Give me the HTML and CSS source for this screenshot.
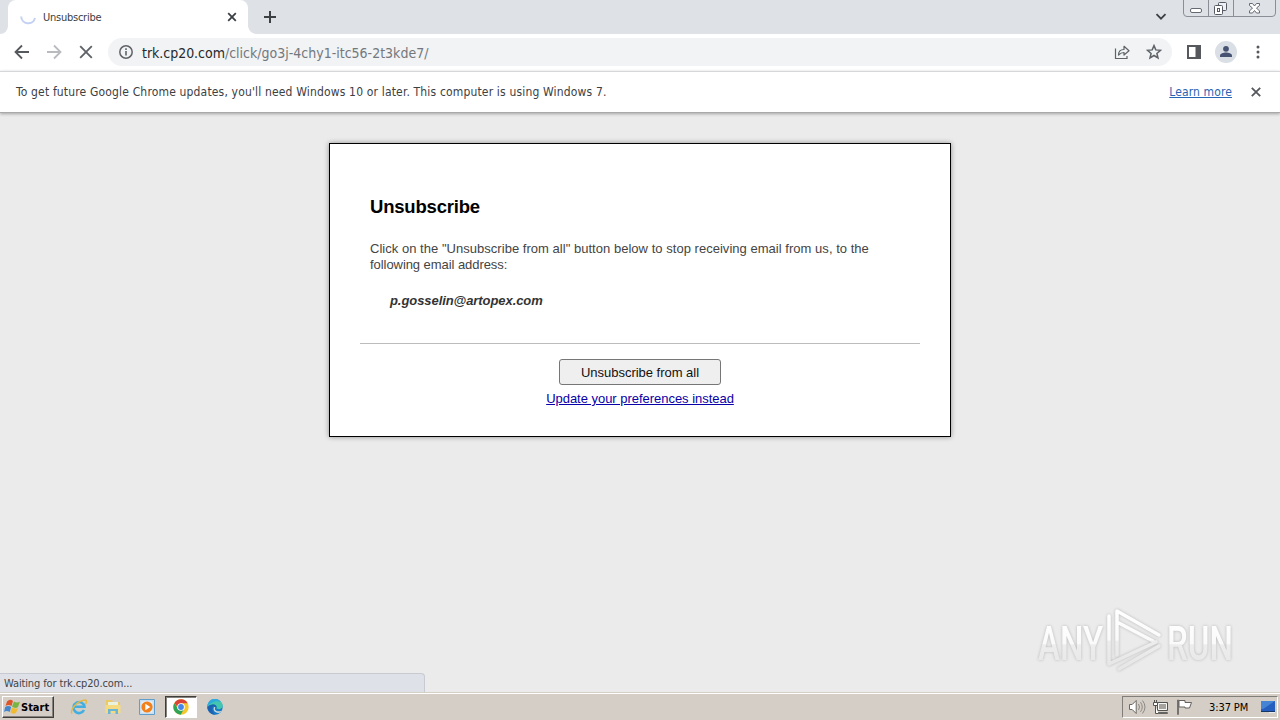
FILE: index.html
```html
<!DOCTYPE html>
<html lang="en">
<head>
<meta charset="utf-8">
<title>Unsubscribe</title>
<link rel="stylesheet" href="styles.css">
</head>
<body>
<div class="screen">
  <header class="tabstrip">
    <div class="prev-tab"></div>
    <div class="tab">
      <svg class="spinner" width="18" height="18" viewBox="0 0 18 18"><path d="M2.2 8.5A7 7 0 0 0 16 10" fill="none" stroke="#c3d1f3" stroke-width="2"/></svg>
      <span class="tab-title">Unsubscribe</span>
      <svg class="tab-close" width="10" height="10" viewBox="0 0 10 10"><path d="M1.2 1.2l7.6 7.6M8.8 1.2L1.2 8.8" stroke="#3c4043" stroke-width="1.8"/></svg>
    </div>
    <div class="after-tab">
      <svg width="12" height="12" viewBox="0 0 12 12"><path d="M6 0v12M0 6h12" stroke="#3c4043" stroke-width="2"/></svg>
    </div>
    <svg class="tab-search" width="12" height="8" viewBox="0 0 12 8"><path d="M1.5 1.2L6 5.7l4.500-4.500" fill="none" stroke="#3c4043" stroke-width="1.8"/></svg>
    <svg class="window-buttons" width="94" height="18" viewBox="0 0 94 18">
      <path d="M.5 0v13q0 3.500 3.500 3.500H89q3.500 0 3.500-3.500V0M25.500 0v16.500M50.500 0v16.500" fill="none" stroke="#8b8e96"/>
      <rect x="7.500" y="8.500" width="11" height="4" rx="1.500" fill="#fff" stroke="#646974"/>
      <rect x="35.500" y="2.500" width="8" height="8" rx="1" fill="#eef0f5" stroke="#555a65"/><rect x="31.500" y="5.500" width="8" height="9" rx="1" fill="#fff" stroke="#555a65"/><rect x="34.500" y="8.500" width="2" height="3" fill="#fff" stroke="#555a65"/>
      <path d="M66.500 3.500h3l2 2.500 2-2.500h3v2L73.500 8l3 3v2h-3l-2-2.500-2 2.500h-3v-2l3-3-3-2.500z" fill="#fff" stroke="#646974"/>
    </svg>
  </header>

  <nav class="toolbar">
    <svg class="ic back" width="16" height="16" viewBox="0 0 16 16"><path d="M15 8H2M8 1.500L1.500 8 8 14.500" fill="none" stroke="#55585c" stroke-width="1.800"/></svg>
    <svg class="ic forward" width="16" height="16" viewBox="0 0 16 16"><path d="M1 8h13M8 1.500L14.500 8 8 14.500" fill="none" stroke="#b9bbbe" stroke-width="1.800"/></svg>
    <svg class="ic stop" width="14" height="14" viewBox="0 0 14 14"><path d="M1.200 1.200l11.600 11.600M12.800 1.200L1.200 12.800" stroke="#5f6368" stroke-width="1.900"/></svg>
    <div class="omnibox">
      <svg class="info" width="14" height="14" viewBox="0 0 14 14"><circle cx="7" cy="7" r="6.200" fill="none" stroke="#5f6368" stroke-width="1.500"/><path d="M7 6v4.500M7 3.300v1.600" stroke="#5f6368" stroke-width="1.600"/></svg>
      <div class="url"><span class="host">trk.cp20.com</span><span class="path">/click/go3j-4chy1-itc56-2t3kde7/</span></div>
      <svg class="share" width="16" height="16" viewBox="0 0 16 16"><path d="M1.500 4.500v10h11.500V12" fill="none" stroke="#5f6368" stroke-width="1.200"/><path d="M4.500 11c0-4 2-5.500 5.500-5.500V2.300l5 4.500-5 4.200V8.500c-2 0-3.500.5-5.500 2.500z" fill="none" stroke="#5f6368" stroke-width="1.200" stroke-linejoin="round"/></svg>
      <svg class="star" width="16" height="16" viewBox="0 0 16 16"><path d="M8 1.600l1.800 4.300 4.700.4-3.600 3.100 1.100 4.600L8 11.500 4 14l1.100-4.600L1.500 6.300l4.700-.4z" fill="none" stroke="#5f6368" stroke-width="1.500"/></svg>
    </div>
    <svg class="panel" width="14" height="14" viewBox="0 0 14 14"><path d="M0 0h14v14H0zM2 2v10h6.500V2z" fill="#55585c" fill-rule="evenodd"/></svg>
    <svg class="avatar" width="22" height="22" viewBox="0 0 22 22"><circle cx="11" cy="11" r="11" fill="#dadee5"/><circle cx="11" cy="7.800" r="2.900" fill="#475372"/><path d="M5 16v-1.500c0-2 3.500-3 6-3s6 1 6 3V16z" fill="#475372"/></svg>
    <svg class="menu" width="4" height="14" viewBox="0 0 4 14"><circle cx="2" cy="2" r="1.500" fill="#55585c"/><circle cx="2" cy="7" r="1.500" fill="#55585c"/><circle cx="2" cy="12" r="1.500" fill="#55585c"/></svg>
  </nav>

  <div class="infobar">
    <span class="infobar-text">To get future Google Chrome updates, you'll need Windows 10 or later. This computer is using Windows 7.</span>
    <a class="learn">Learn more</a>
    <svg class="infobar-close" width="10" height="10" viewBox="0 0 10 10"><path d="M.8.8l8.400 8.400M9.200.8L.8 9.200" stroke="#55585c" stroke-width="1.800"/></svg>
  </div>

  <main class="page">
    <section class="card">
      <h1 class="heading">Unsubscribe</h1>
      <p class="copy"><span class="line-one">Click on the "Unsubscribe from all" button below to stop receiving email from us, to the</span><br><span class="line-two">following email address:</span></p>
      <p class="email">p.gosselin@artopex.com</p>
      <div class="actions">
        <button class="unsubscribe">Unsubscribe from all</button>
        <a class="preferences">Update your preferences instead</a>
      </div>
    </section>
    <div class="watermark">
      <svg width="230" height="78" viewBox="0 0 230 78">
        <defs><linearGradient id="fade" x1="0" y1="0" x2="0" y2="1"><stop offset="0" stop-color="#fff"/><stop offset=".5" stop-color="#fafafa"/><stop offset=".52" stop-color="#ededed"/><stop offset="1" stop-color="#e6e6e6"/></linearGradient></defs>
        <g class="mark">
          <text class="brand" transform="translate(4 54) scale(.69 1)">ANY</text>
          <text class="brand" transform="translate(133 54) scale(.69 1)">RUN</text>
          <path d="M83 49V5l42 24M75 10v48l47-22M83 42V16l36 19M85 63l40-23" fill="none" stroke="url(#fade)" stroke-width="3.500" stroke-linejoin="round" stroke-linecap="round"/>
        </g>
      </svg>
    </div>
    <div class="status"><span class="status-text">Waiting for trk.cp20.com...</span></div>
  </main>

  <footer class="taskbar">
    <button class="start">
      <svg width="17" height="16" viewBox="0 0 17 16"><path d="M3 2.500Q6-.5 9 2L7.500 7Q4.500 5 1.500 7z" fill="#dd5528"/><path d="M10 2.500q3 2 6 0L14 8q-3 2-6-.5z" fill="#79b442"/><path d="M1.200 8q3-2 6 0l-1.500 5q-3-2-5.700 0z" fill="#4386cc"/><path d="M8 8.500q3 2 6 .5l-2 5q-3 1.500-5.500-.5z" fill="#f0bb2e"/></svg>
      <span class="start-label">Start</span>
    </button>
    <div class="quick">
      <svg class="app" width="18" height="18" viewBox="0 0 18 18"><path d="M14 12A5.500 5.500 0 1 1 14.500 8.800H4.500" fill="none" stroke="#45aee0" stroke-width="2.600"/><path d="M2.200 15.500C-.5 13 6 3 15 2c2 0 2 2 .5 4" fill="none" stroke="#e4b844" stroke-width="1.500"/></svg>
      <svg class="app" width="18" height="18" viewBox="0 0 18 18"><path d="M2 2h6l1 2h7v11H2z" fill="#ebc967"/><path d="M4 4h10v4H4z" fill="#e9f2df"/><path d="M1.500 7h15v8h-15z" fill="#f4db82"/><path d="M4 16v-5h10v5h-2.500v-3h-5v3z" fill="#68b5d8"/></svg>
      <svg class="app" width="18" height="18" viewBox="0 0 18 18"><path d="M1.500 1.500h15v15h-15z" fill="#c8e0f1" stroke="#609ecb"/><path d="M3.500 3.500h11v11h-11z" fill="#e8f1f7"/><circle cx="9" cy="9" r="5.600" fill="#f2811d"/><path d="M7.300 5.800v6.400L12.300 9z" fill="#fff"/></svg>
      <span class="active-app"><svg width="16" height="16" viewBox="0 0 16 16"><circle cx="8" cy="8" r="7.700" fill="#f5c72d"/><path d="M1.300 4.200A7.700 7.700 0 0 0 7.800 15.700L11 9.800 8 8 5 9.700z" fill="#2fa456"/><path d="M1.300 4.200A7.700 7.700 0 0 1 14.700 4.200H8L4.700 8z" fill="#dc4338"/><circle cx="8" cy="8" r="3.800" fill="#fff"/><circle cx="8" cy="8" r="2.900" fill="#4587e8"/></svg></span>
      <svg class="app edge" width="16" height="16" viewBox="0 0 16 16"><circle cx="8" cy="8" r="7.700" fill="#147bc6"/><path d="M.3 8C1-2.500 15.700-1.500 15.700 7c0 3-4.500 4-6.500 2.300C11 5.500 5 3.500.3 8z" fill="#42c6b0"/><path d="M.3 8C1-2.500 12-1.500 13.500 3 9 1 3 4 .3 8z" fill="#2eaadc"/><path d="M9.200 9.300C11 5.500 5 3.500.3 8c0 4 4 8 8 7.700C5 14 4 8 7 7z" fill="#1c62b1"/><path d="M8.500 8c-2 3 1.500 5.500 6 3.800l-1 1.800C8 15 5.500 11 7 8z" fill="#c9d6da"/></svg>
    </div>
    <div class="tray">
      <svg class="volume" width="18" height="16" viewBox="0 0 18 16"><path d="M1.500 5.500h2.700l4-4v13l-4-4H1.500z" fill="#fff" stroke="#6a6764"/><path d="M10.500 5q2 3 0 6M12.500 3.200q3.500 4.800 0 9.600M14.500 1.500q5 6.500 0 13" fill="none" stroke="#8b8884"/></svg>
      <svg class="network" width="17" height="16" viewBox="0 0 17 16"><path d="M5.500 3.500h10v8h-10z" fill="#a6a39f" stroke="#55534f"/><path d="M6.500 4.500h8v6h-8z" fill="none" stroke="#f8f8f8"/><path d="M5.500 13.500h10v1h-10z" fill="#fff" stroke="#65635f"/><path d="M1.500 3.500h4v3h-4zM2.500 1v2M4.500 1v2M3.500 7v7.500h3" fill="#fff" stroke="#55534f"/></svg>
      <svg class="flag" width="17" height="16" viewBox="0 0 17 16"><path d="M2.500 1v14.500h-1V1z" fill="#fff" stroke="#75726f"/><path d="M3 1.500h6v2h6.500l-2 5.500H9V8H3z" fill="#fff" stroke="#65625f"/></svg>
      <span class="clock">3:37 PM</span>
      <svg class="desktop" width="16" height="14" viewBox="0 0 16 14"><path d="M1 1h14v10H1z" fill="#245fc0"/><path d="M1 1h14L3 9H1z" fill="#4583d4"/><path d="M1 11h14v1H1z" fill="#163665"/><path d="M9 12h6v1H9z" fill="#e8edf3"/></svg>
    </div>
  </footer>
</div>
</body>
</html>
```
FILE: styles.css
```css
* { box-sizing: border-box; }
body { margin: 0; overflow: hidden; font-family: "DejaVu Sans Condensed", "DejaVu Sans", sans-serif; }
svg { display: block; flex: none; }
.screen { width: 1280px; height: 720px; display: flex; flex-direction: column; background: #ebebeb; }
.tabstrip { height: 34px; flex: none; display: flex; background: #dee1e6; }
.prev-tab { width: 8px; background: #fff; }
.prev-tab::before { content: ""; display: block; height: 34px; background: #dee1e6; border-bottom-right-radius: 8px; }
.tab { width: 240px; display: flex; align-items: center; padding: 0 11px; background: #fff; border-radius: 8px 8px 0 0; }
.tab-title { margin-left: 6px; font: 11px "DejaVu Sans Condensed", sans-serif; color: #3c4043; letter-spacing: -.25px; white-space: nowrap; }
.tab-close { margin-left: auto; }
.after-tab { width: 40px; height: 34px; padding: 11px 0 0 16px; background: #dee1e6; position: relative; }
.after-tab::before { content: ""; position: absolute; left: 0; bottom: 0; width: 8px; height: 8px; background: radial-gradient(circle at 8px 0, #dee1e6 7.500px, #fff 8px); }
.tab-search { margin: 13px 16px 0 auto; }
.window-buttons { margin-right: 3px; }
.toolbar { height: 37px; flex: none; display: flex; align-items: center; background: #fff; padding: 0 0 1px 14px; }
.forward { margin-left: 16px; }
.stop { margin-left: 17px; }
.omnibox { width: 1064px; height: 28px; margin-left: 15px; padding: 0 10px 0 11px; display: flex; align-items: center; border-radius: 14px; background: #f1f3f4; }
.url { margin-left: 9px; padding-top: 2px; font-size: 14px; line-height: 20px; white-space: nowrap; }
.host { color: #27292c; letter-spacing: -.03px; }
.path { color: #74787d; letter-spacing: 0; }
.share { margin-left: auto; }
.star { margin-left: 16px; }
.panel { margin-left: 15px; }
.avatar { margin-left: 14px; }
.menu { margin-left: 19px; }
.infobar { height: 42px; flex: none; display: flex; align-items: center; padding: 0 19px 0 16px; background: #fff; border-top: 1px solid #d6d7d9; border-bottom: 1px solid #a9a9a9; box-shadow: 0 1px 3px rgba(0,0,0,.3); z-index: 1; font-size: 12px; white-space: nowrap; }
.infobar-text { color: #3c4043; letter-spacing: .165px; }
.learn { margin-left: auto; margin-right: 19px; color: #2864b5; letter-spacing: .12px; text-decoration: underline; }
.page { flex: 1; min-height: 0; padding-top: 30px; position: relative; font-family: "Liberation Sans", Arial, sans-serif; }
.card { width: 622px; height: 294px; margin: 0 auto; padding: 52px 30px 0; background: #fff; border: 1px solid #000; box-shadow: 0 0 5px rgba(0,0,0,.4); }
.heading { margin: 0 10px; font-size: 18.500px; line-height: 22px; letter-spacing: -.2px; }
.copy { margin: 23px 10px 0; color: #444; font-size: 13px; line-height: 16px; white-space: nowrap; }
.line-one { letter-spacing: .03px; }
.line-two { letter-spacing: -.06px; }
.email { width: max-content; margin: 20px 30px 0; color: #333; font-size: 13px; font-style: italic; font-weight: bold; line-height: 16px; letter-spacing: -.07px; }
.actions { margin-top: 34px; padding-top: 15px; display: flex; flex-direction: column; align-items: center; border-top: 1px solid #bcbcbc; font-size: 13px; }
.unsubscribe { width: 162px; height: 26px; padding: 0; border: 1px solid #767676; border-radius: 3px; background: #efefef; color: #111; font: 13px "Liberation Sans", sans-serif; letter-spacing: -.02px; }
.preferences { margin-top: 6px; line-height: 16px; color: #0800a8; letter-spacing: -.03px; text-decoration: underline; white-space: nowrap; }
.watermark { position: absolute; left: 1034px; top: 493px; }
.mark { filter: drop-shadow(0 0 1.500px rgba(0,0,0,.22)); }
.brand { font: 500 48px "Roboto", sans-serif; fill: url(#fade); }
.status { position: absolute; left: 0; bottom: 0; width: 425px; height: 19px; padding: 0 4px; display: flex; align-items: center; background: #dee1e8; border: 1px solid #c7cad0; border-left: 0; border-bottom: 0; border-top-right-radius: 4px; font: 11px "DejaVu Sans Condensed", sans-serif; color: #444; letter-spacing: -.13px; }
.taskbar { height: 28px; flex: none; display: flex; align-items: center; background: #d5cec6; border-top: 1px solid #d4d0c8; box-shadow: inset 0 1px #fff; padding: 1px 2px 0; }
.start { width: 52px; height: 22px; padding: 0 0 0 1px; display: flex; align-items: center; background: #d5cec6; border: 1px solid; border-color: #fff #403d3a #403d3a #fff; box-shadow: inset -1px -1px #85817c; }
.start-label { font: bold 11px "DejaVu Sans Condensed", sans-serif; }
.quick { display: flex; align-items: center; margin-left: 16px; gap: 16px; }
.active-app { width: 32px; height: 22px; margin-left: -7px; display: grid; place-items: center; background: #fff; border: 1px solid; border-color: #403d3a #fff #fff #403d3a; box-shadow: inset 1px 1px #85817c; }
.edge { margin-left: -6px; }
.tray { width: 156px; height: 22px; margin-left: auto; padding: 0 0 0 5px; display: flex; align-items: center; border: 1px solid; border-color: #817d78 #fff #fff #817d78; font-size: 11px; white-space: nowrap; }
.network { margin-left: 6px; }
.flag { margin-left: 7px; }
.clock { width: 40px; margin-left: 16px; letter-spacing: -.1px; }
.desktop { margin-left: auto; margin-right: 1px; }
```
